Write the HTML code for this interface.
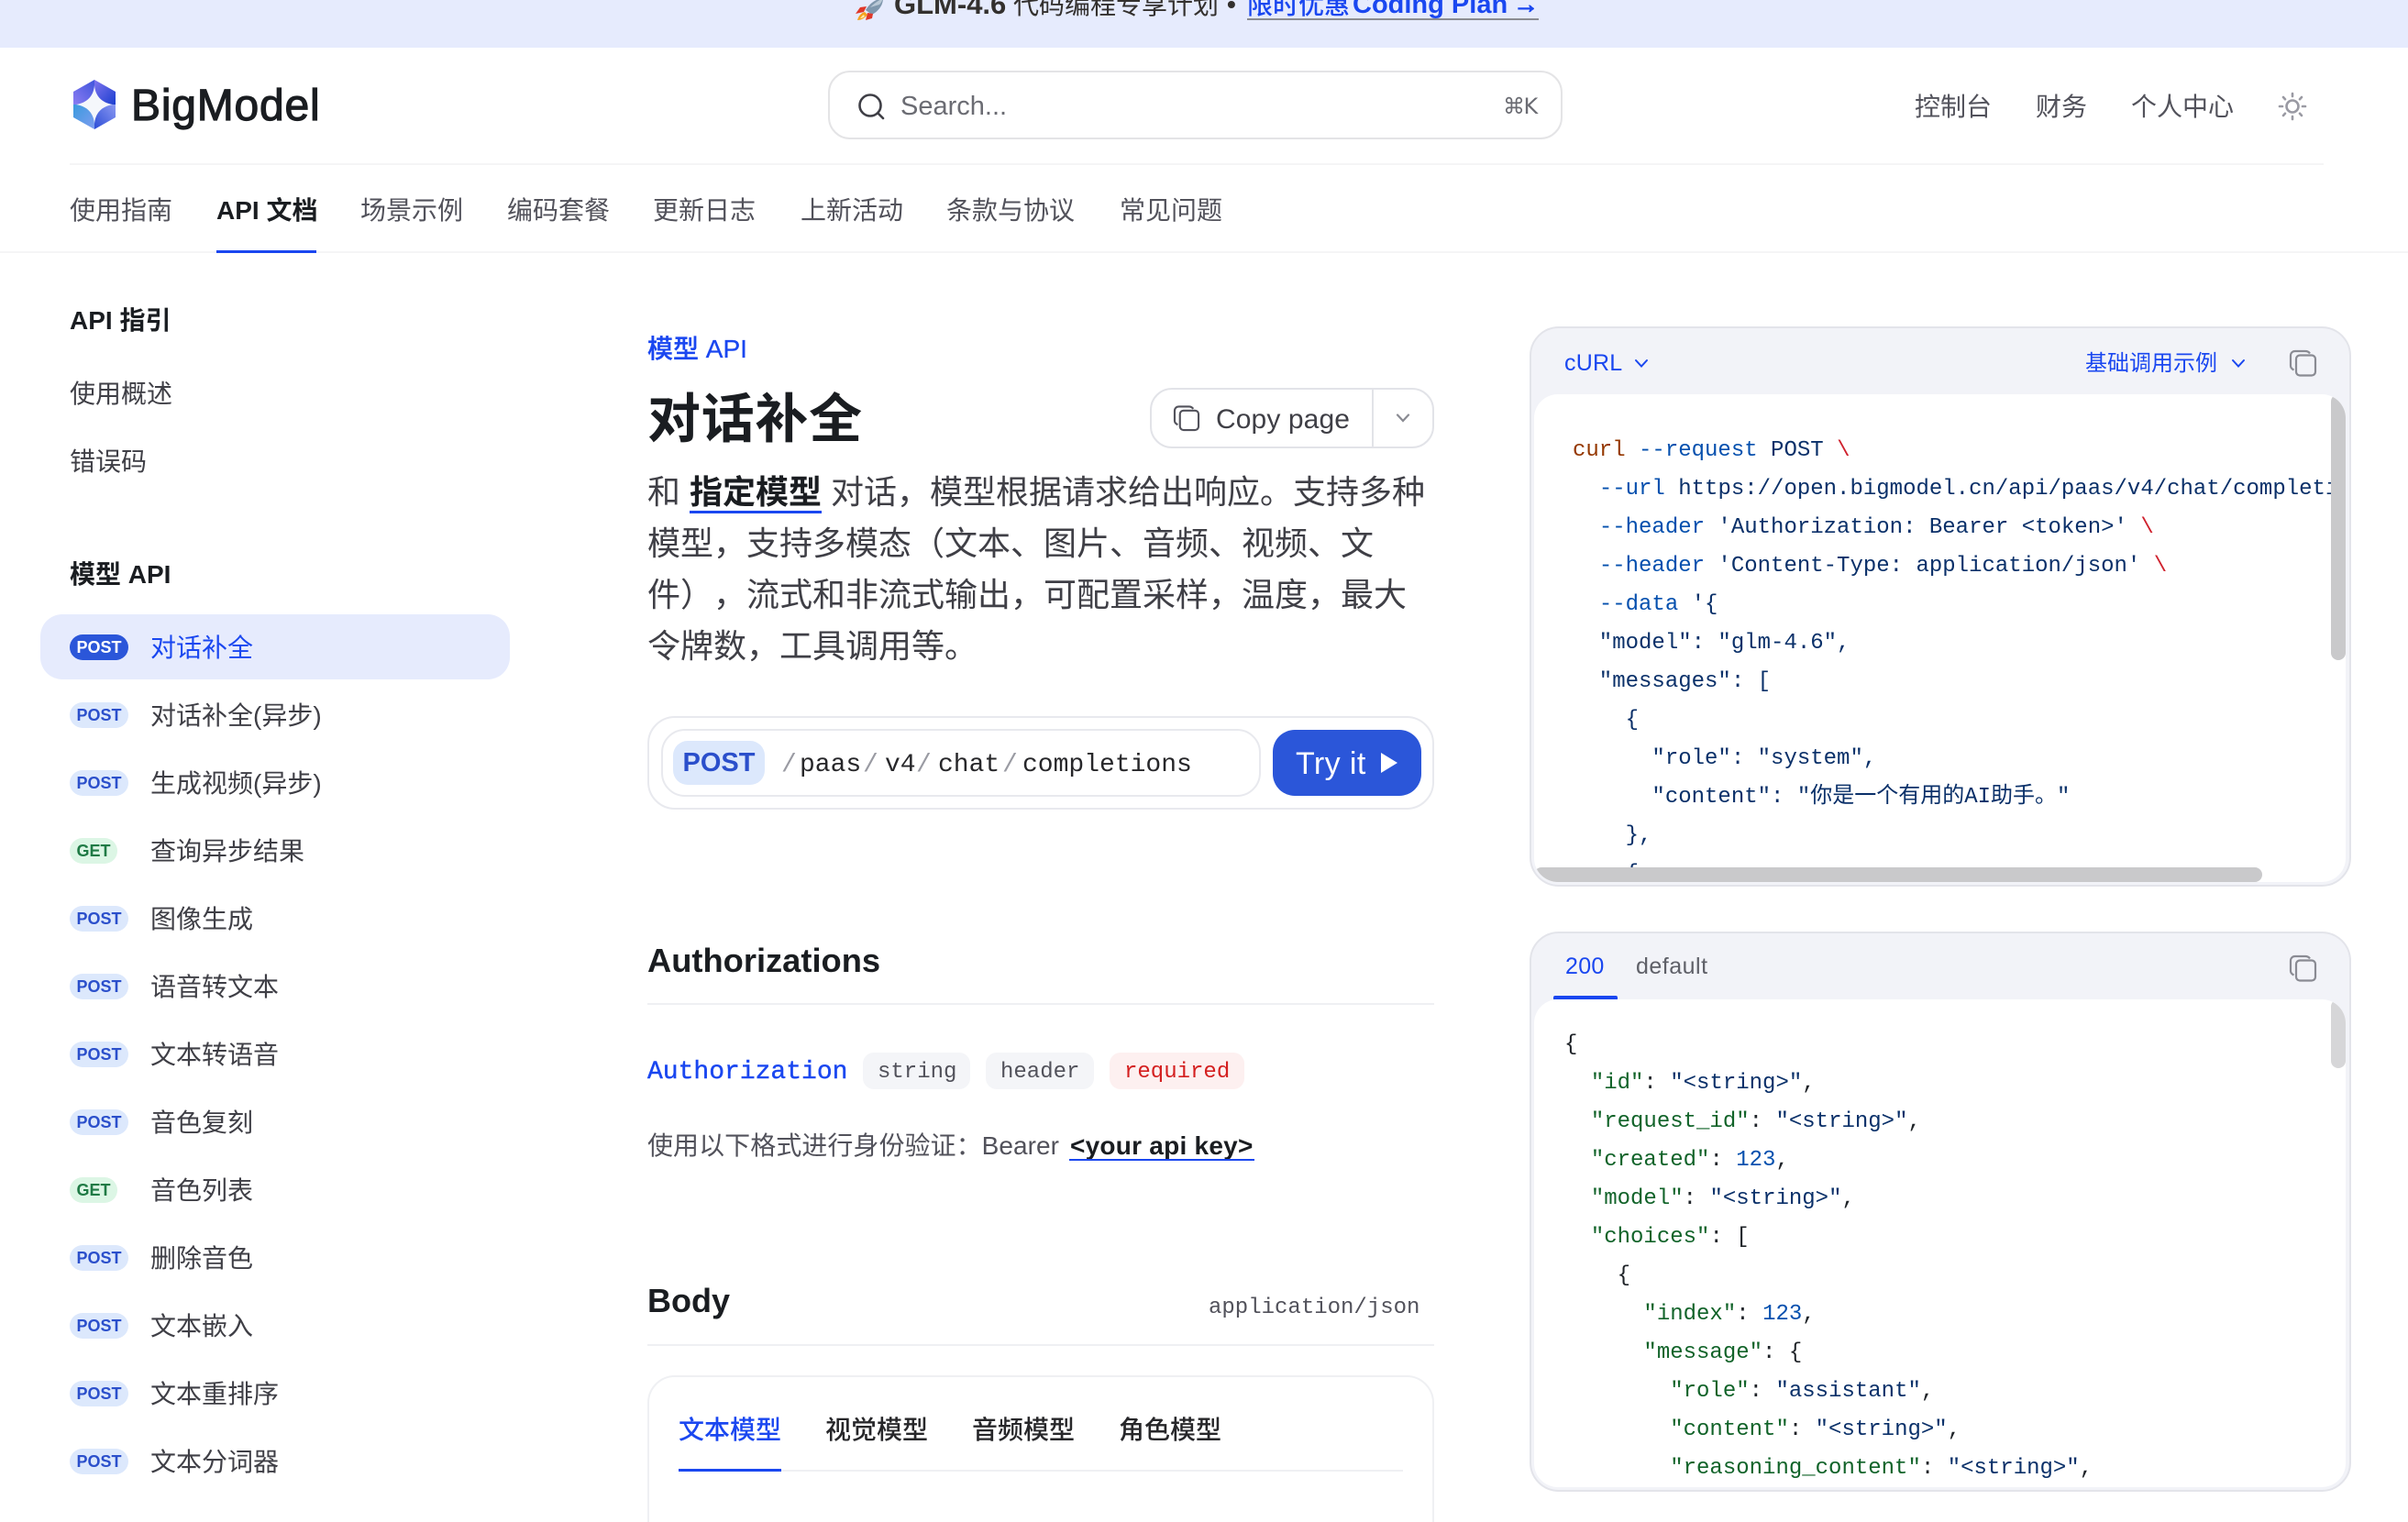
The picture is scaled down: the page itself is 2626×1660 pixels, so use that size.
<!DOCTYPE html>
<html lang="zh-CN"><head><meta charset="utf-8"><title>对话补全</title>
<style>
*{box-sizing:border-box}
html,body{margin:0;padding:0;width:2626px;height:1660px;overflow:hidden;background:#fff}
body{position:relative;font-family:"Liberation Sans","Noto Sans CJK SC",sans-serif;color:#3f3f46;text-spacing-trim:space-all}
.a{position:absolute}
.t{position:absolute;white-space:pre;font-size:28px;line-height:40px}
.m{font-family:"Liberation Mono","Noto Sans CJK SC",monospace}
.nav{color:#52525b;top:210px}
.top{color:#52525b;top:97px}
.side{left:164px;color:#3f3f46}
.pill{position:absolute;left:76px;width:64px;height:28px;border-radius:14px;background:#dce8fc;color:#2b4fcb;font-weight:700;font-size:18px;line-height:28px;text-align:center}
.pill.g{width:52px;background:#dcf6e5;color:#1f7a45}
.box{position:absolute;border:2px solid #e3e4ea;background:#f2f3f8;border-radius:32px;left:1668px;width:896px;height:611px}
.inner{position:absolute;left:1673px;width:885px;height:532px;background:#fff;border-radius:26px;overflow:hidden}
.clip{position:absolute;left:0;top:0;width:869px;overflow:hidden}
pre{margin:0;position:absolute;font-family:"Liberation Mono","Noto Sans CJK SC",monospace;font-size:24px;line-height:42px;color:#1f2328}
.k{color:#116329}.s{color:#0a3069}.n{color:#0550ae}.r{color:#cf222e}.c{color:#953800}
.bar{position:absolute;background:#c9c9cb;border-radius:8px}
.hr{position:absolute;left:706px;width:858px;height:2px;background:#eff0f3}
.chip{position:absolute;top:1148px;height:40px;border-radius:12px;background:#f4f5f8}
svg{position:absolute;overflow:visible}
.sl{color:#9a9ba3;top:815px}
.pth{color:#27272a;top:815px}
</style></head><body>

<div class="a" style="left:0;top:0;width:2626px;height:52px;background:#e6ebfd"></div>
<svg style="left:932px;top:-2px" width="32" height="24" viewBox="0 0 32 24"><path d="M12 13C17 5 23 1 31 0C31 8 26 14 19 18Z" fill="#7f97ad"/><path d="M17 10C21 6 25 3 31 0C30 3 29 5 27 7Z" fill="#b9c8d6"/><path d="M13 9L6 10L1 17L10 15Z" fill="#e0382a"/><path d="M20 17L19 22L12 24L14 16Z" fill="#e0382a"/><path d="M11 15C7 16 4 20 3 24C7 24 11 22 14 18Z" fill="#f6a21e"/><path d="M10 18C8 19 7 21 6 22C8 22 10 21 11 20Z" fill="#fde9a8"/></svg>
<div class="t" style="left:975px;top:-15px;font-size:31px;font-weight:700;color:#33302e">GLM-4.6</div>
<div class="t" style="left:1105px;top:-14px;color:#33302e">代码编程专享计划</div>
<div class="t" style="left:1338px;top:-15px;font-weight:700;color:#33302e">•</div>
<div class="t" style="left:1360px;top:-14px;font-weight:500;color:#1a47f0">限时优惠</div>
<div class="t" style="left:1475px;top:-15px;font-size:29px;font-weight:700;color:#1a47f0">Coding Plan</div>
<div class="t" style="left:1650px;top:-15px;font-weight:700;color:#1a47f0;-webkit-text-stroke:1px #1a47f0">→</div>
<div class="a" style="left:1360px;top:20px;width:318px;height:2px;background:#8b8c92"></div>

<svg style="left:80px;top:87px" width="46" height="54" viewBox="0 0 46 54">
<defs>
<linearGradient id="g1" x1="0" y1="1" x2="1" y2="0"><stop offset="0" stop-color="#8b7cf2"/><stop offset="1" stop-color="#3f55dc"/></linearGradient>
<linearGradient id="g2" x1="0" y1="0" x2="1" y2="1"><stop offset="0" stop-color="#8074ee"/><stop offset="1" stop-color="#1b3fd0"/></linearGradient>
<linearGradient id="g3" x1="0" y1="0" x2="1" y2="1"><stop offset="0" stop-color="#3a9ade"/><stop offset="1" stop-color="#7f9df0"/></linearGradient>
<linearGradient id="g4" x1="1" y1="0" x2="0" y2="1"><stop offset="0" stop-color="#8a98f2"/><stop offset="1" stop-color="#2c4dd6"/></linearGradient>
</defs>
<path d="M23 0L0 13V27H23Z" fill="url(#g1)"/><path d="M23 0L46 13V27H23Z" fill="url(#g2)"/><path d="M23 54L0 41V27H23Z" fill="url(#g3)"/><path d="M23 54L46 41V27H23Z" fill="url(#g4)"/>
<path d="M23 6C24 18 31 25 43 27C31 29 24 36 23 48C22 36 15 29 3 27C15 25 22 18 23 6Z" fill="#f5f7fb"/>
</svg>
<div class="t" style="left:143px;top:86px;font-size:48px;line-height:60px;color:#1a1d21;-webkit-text-stroke:1.2px #1a1d21;letter-spacing:.8px">BigModel</div>

<div class="a" style="left:903px;top:77px;width:801px;height:75px;border:2px solid #e4e4e6;border-radius:24px"></div>
<svg style="left:934px;top:100px" width="32" height="32" viewBox="0 0 32 32" fill="none" stroke="#3f3f46" stroke-width="2.6" stroke-linecap="round"><circle cx="15" cy="15" r="11.5"/><path d="M23.5 23.5L29 29"/></svg>
<div class="t" style="left:982px;top:96px;font-size:29px;color:#6b6c73">Search...</div>
<div class="t" style="left:1639px;top:96px;font-size:24px;color:#6b6c73;font-family:'DejaVu Sans','Liberation Sans',sans-serif;letter-spacing:-1.5px">⌘K</div>

<div class="t top" style="left:2088px">控制台</div>
<div class="t top" style="left:2220px">财务</div>
<div class="t top" style="left:2324px">个人中心</div>
<svg style="left:2484px;top:100px" width="32" height="32" viewBox="0 0 32 32" fill="none" stroke="#9a9aa3" stroke-width="2.6" stroke-linecap="round"><circle cx="16" cy="16" r="6.5"/><path d="M16 2V5M16 27V30M2 16H5M27 16H30M6 6L8 8.2M24 23.8L26 26M6 26L8 23.8M24 8.2L26 6"/></svg>

<div class="a" style="left:76px;top:178px;width:2458px;height:2px;background:#f5f5f6"></div>
<div class="a" style="left:0;top:274px;width:2626px;height:2px;background:#f5f5f6"></div>

<div class="t nav" style="left:76px">使用指南</div>
<div class="t nav" style="left:236px;color:#1a1d21;font-weight:600">API 文档</div>
<div class="t nav" style="left:393px">场景示例</div>
<div class="t nav" style="left:553px">编码套餐</div>
<div class="t nav" style="left:712px">更新日志</div>
<div class="t nav" style="left:873px">上新活动</div>
<div class="t nav" style="left:1032px">条款与协议</div>
<div class="t nav" style="left:1221px">常见问题</div>
<div class="a" style="left:236px;top:273px;width:109px;height:3px;background:#1a47f0"></div>

<div class="t" style="left:76px;top:330px;font-weight:600;color:#1a1d21">API 指引</div>
<div class="t" style="left:76px;top:410px">使用概述</div>
<div class="t" style="left:76px;top:484px">错误码</div>
<div class="t" style="left:76px;top:607px;font-weight:600;color:#1a1d21">模型 API</div>

<div class="a" style="left:44px;top:670px;width:512px;height:71px;background:#e6ebfd;border-radius:24px"></div>
<div class="pill" style="top:692px;background:#2b56d9;color:#fff">POST</div><div class="t side" style="top:687px;color:#1a47f0">对话补全</div>
<div class="pill" style="top:766px">POST</div><div class="t side" style="top:761px">对话补全(异步)</div>
<div class="pill" style="top:840px">POST</div><div class="t side" style="top:835px">生成视频(异步)</div>
<div class="pill g" style="top:914px">GET</div><div class="t side" style="top:909px">查询异步结果</div>
<div class="pill" style="top:988px">POST</div><div class="t side" style="top:983px">图像生成</div>
<div class="pill" style="top:1062px">POST</div><div class="t side" style="top:1057px">语音转文本</div>
<div class="pill" style="top:1136px">POST</div><div class="t side" style="top:1131px">文本转语音</div>
<div class="pill" style="top:1210px">POST</div><div class="t side" style="top:1205px">音色复刻</div>
<div class="pill g" style="top:1284px">GET</div><div class="t side" style="top:1279px">音色列表</div>
<div class="pill" style="top:1358px">POST</div><div class="t side" style="top:1353px">删除音色</div>
<div class="pill" style="top:1432px">POST</div><div class="t side" style="top:1427px">文本嵌入</div>
<div class="pill" style="top:1506px">POST</div><div class="t side" style="top:1501px">文本重排序</div>
<div class="pill" style="top:1580px">POST</div><div class="t side" style="top:1575px">文本分词器</div>

<div class="t" style="left:706px;top:361px;color:#1a47f0;font-weight:500;-webkit-text-stroke:.3px #1a47f0">模型 API</div>
<div class="t" style="left:706px;top:418px;font-size:58px;line-height:80px;font-weight:700;color:#1a1d21;letter-spacing:.7px">对话补全</div>

<div class="a" style="left:1254px;top:423px;width:310px;height:66px;border:2px solid #e2e3e8;border-radius:24px"></div>
<div class="a" style="left:1496px;top:424px;width:2px;height:64px;background:#e2e3e8"></div>
<svg style="left:1280px;top:442px" width="28" height="28" viewBox="0 0 29 28" fill="none" stroke="#52525b" stroke-width="2.2"><rect x="7" y="5.5" width="21" height="22" rx="4"/><path d="M4.5 21.5C2.5 20.5 1 19 1 17V6C1 3 3 1 6 1H17C19 1 21 2 22 3.5"/></svg>
<div class="t" style="left:1326px;top:438px;font-size:30px;color:#3f3f46;letter-spacing:.1px">Copy page</div>
<svg style="left:1523px;top:451px" width="14" height="10" viewBox="0 0 14 10" fill="none" stroke="#8a8b93" stroke-width="2.2" stroke-linecap="round"><path d="M1 1.5L7 8L13 1.5"/></svg>

<div class="t" style="left:706px;top:509px;font-size:36px;line-height:56px;color:#3f3f46">和 <span style="font-weight:700;color:#1a1d21;border-bottom:3px solid #1a47f0;padding-bottom:0">指定模型</span> 对话，模型根据请求给出响应。支持多种</div>
<div class="t" style="left:706px;top:565px;font-size:36px;line-height:56px">模型，支持多模态（文本、图片、音频、视频、文</div>
<div class="t" style="left:706px;top:621px;font-size:36px;line-height:56px">件），流式和非流式输出，可配置采样，温度，最大</div>
<div class="t" style="left:706px;top:677px;font-size:36px;line-height:56px">令牌数，工具调用等。</div>

<div class="a" style="left:706px;top:781px;width:858px;height:102px;border:2px solid #e8e9ee;border-radius:30px"></div>
<div class="a" style="left:721px;top:795px;width:654px;height:74px;border:2px solid #e8e9ee;border-radius:26px"></div>
<div class="a" style="left:734px;top:808px;width:100px;height:48px;border-radius:16px;background:#dce8fc;color:#2b4fcb;font-weight:700;font-size:29px;line-height:48px;text-align:center">POST</div>
<div class="t m sl" style="left:852px">/</div><div class="t m pth" style="left:872px">paas</div>
<div class="t m sl" style="left:941px">/</div><div class="t m pth" style="left:965px">v4</div>
<div class="t m sl" style="left:999px">/</div><div class="t m pth" style="left:1023px">chat</div>
<div class="t m sl" style="left:1093px">/</div><div class="t m pth" style="left:1115px">completions</div>
<div class="a" style="left:1388px;top:796px;width:162px;height:72px;background:#2b56d9;border-radius:24px"></div>
<div class="t" style="left:1413px;top:813px;font-size:34px;color:#fff;letter-spacing:.4px">Try it</div>
<svg style="left:1505px;top:821px" width="20" height="22" viewBox="0 0 20 22"><path d="M1 0L19 11L1 22Z" fill="#fff"/></svg>

<div class="t" style="left:706px;top:1028px;font-size:36.3px;font-weight:700;color:#1a1d21">Authorizations</div>
<div class="hr" style="top:1094px"></div>
<div class="t m" style="left:706px;top:1150px;color:#1a47f0;-webkit-text-stroke:.4px #1a47f0">Authorization</div>
<div class="chip" style="left:941px;width:117px"></div><div class="t m" style="left:957px;top:1150px;font-size:24px;color:#52525b">string</div>
<div class="chip" style="left:1075px;width:118px"></div><div class="t m" style="left:1091px;top:1150px;font-size:24px;color:#52525b">header</div>
<div class="chip" style="left:1210px;width:147px;background:#fdf0f0"></div><div class="t m" style="left:1226px;top:1150px;font-size:24px;color:#d42020">required</div>
<div class="t" style="left:706px;top:1230px;color:#52525b;letter-spacing:.05px">使用以下格式进行身份验证：Bearer</div>
<div class="t" style="left:1167px;top:1230px;font-weight:700;color:#1a1d21;letter-spacing:.25px">&lt;your api key&gt;</div>
<div class="a" style="left:1166px;top:1264px;width:202px;height:2px;background:#1a47f0"></div>

<div class="t" style="left:706px;top:1397px;font-size:36px;line-height:44px;font-weight:700;color:#1a1d21">Body</div>
<div class="t m" style="left:1318px;top:1407px;font-size:24px;color:#52525b">application/json</div>
<div class="hr" style="top:1466px"></div>
<div class="a" style="left:706px;top:1500px;width:858px;height:200px;border:2px solid #eff0f3;border-radius:30px"></div>
<div class="t" style="left:740px;top:1540px;color:#1a47f0;font-weight:500">文本模型</div>
<div class="t" style="left:900px;top:1540px;color:#27272a;font-weight:500">视觉模型</div>
<div class="t" style="left:1060px;top:1540px;color:#27272a;font-weight:500">音频模型</div>
<div class="t" style="left:1220px;top:1540px;color:#27272a;font-weight:500">角色模型</div>
<div class="a" style="left:740px;top:1603px;width:790px;height:2px;background:#eff0f3"></div>
<div class="a" style="left:740px;top:1602px;width:112px;height:3px;background:#1a47f0"></div>

<div class="box" style="top:356px"></div>
<div class="t" style="left:1706px;top:376px;font-size:25px;color:#1a47f0;letter-spacing:.2px">cURL</div>
<svg style="left:1783px;top:392px" width="14" height="9" viewBox="0 0 14 9" fill="none" stroke="#1a47f0" stroke-width="2" stroke-linecap="round"><path d="M1 1L7 7.5L13 1"/></svg>
<div class="t" style="left:2274px;top:377px;font-size:24px;color:#1a47f0">基础调用示例</div>
<svg style="left:2434px;top:392px" width="14" height="9" viewBox="0 0 14 9" fill="none" stroke="#1a47f0" stroke-width="2" stroke-linecap="round"><path d="M1 1L7 7.5L13 1"/></svg>
<svg style="left:2497px;top:382px" width="29" height="28" viewBox="0 0 29 28" fill="none" stroke="#8a8b93" stroke-width="2.2"><rect x="7" y="5.5" width="21" height="22" rx="4"/><path d="M4.5 21.5C2.5 20.5 1 19 1 17V6C1 3 3 1 6 1H17C19 1 21 2 22 3.5"/></svg>
<div class="inner" style="top:430px">
<div class="clip" style="height:516px">
<pre class="s" style="left:42px;top:41px"><span class="c">curl</span> <span class="n">--request</span> POST <span class="r">\</span>
  <span class="n">--url</span> https://open.bigmodel.cn/api/paas/v4/chat/completions <span class="r">\</span>
  <span class="n">--header</span> 'Authorization: Bearer &lt;token&gt;' <span class="r">\</span>
  <span class="n">--header</span> 'Content-Type: application/json' <span class="r">\</span>
  <span class="n">--data</span> '{
  "model": "glm-4.6",
  "messages": [
    {
      "role": "system",
      "content": "你是一个有用的AI助手。"
    },
    {</pre>
</div>
<div class="bar" style="left:869px;top:0;width:16px;height:290px"></div>
<div class="bar" style="left:0;top:516px;width:794px;height:16px"></div>
</div>

<div class="box" style="top:1016px"></div>
<div class="t" style="left:1707px;top:1034px;font-size:25px;color:#1a47f0;letter-spacing:.3px">200</div>
<div class="t" style="left:1784px;top:1034px;font-size:25px;color:#5f6068;letter-spacing:.5px">default</div>
<div class="a" style="left:1694px;top:1086px;width:70px;height:4px;background:#1a47f0;border-radius:2px 2px 0 0"></div>
<svg style="left:2497px;top:1042px" width="29" height="28" viewBox="0 0 29 28" fill="none" stroke="#8a8b93" stroke-width="2.2"><rect x="7" y="5.5" width="21" height="22" rx="4"/><path d="M4.5 21.5C2.5 20.5 1 19 1 17V6C1 3 3 1 6 1H17C19 1 21 2 22 3.5"/></svg>
<div class="inner" style="top:1090px">
<div class="clip" style="height:532px">
<pre style="left:33px;top:29px">{
  <span class="k">"id"</span>: <span class="s">"&lt;string&gt;"</span>,
  <span class="k">"request_id"</span>: <span class="s">"&lt;string&gt;"</span>,
  <span class="k">"created"</span>: <span class="n">123</span>,
  <span class="k">"model"</span>: <span class="s">"&lt;string&gt;"</span>,
  <span class="k">"choices"</span>: [
    {
      <span class="k">"index"</span>: <span class="n">123</span>,
      <span class="k">"message"</span>: {
        <span class="k">"role"</span>: <span class="s">"assistant"</span>,
        <span class="k">"content"</span>: <span class="s">"&lt;string&gt;"</span>,
        <span class="k">"reasoning_content"</span>: <span class="s">"&lt;string&gt;"</span>,</pre>
</div>
<div class="bar" style="left:869px;top:0;width:16px;height:75px;background:#d6d6d8"></div>
</div>

</body></html>
